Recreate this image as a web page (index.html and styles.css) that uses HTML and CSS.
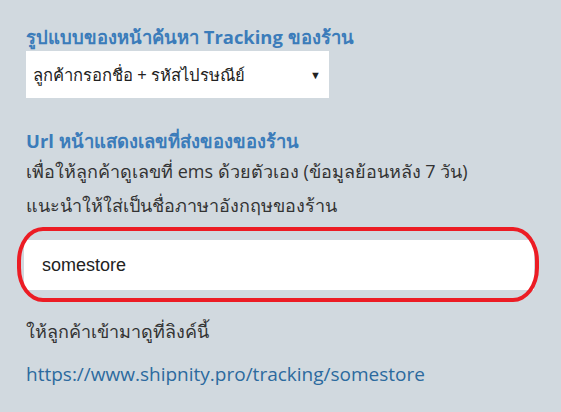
FILE: index.html
```html
<!DOCTYPE html>
<html>
<head>
    <title>Tracking Settings</title>
    <link rel="stylesheet" href="styles.css">
</head>
<body>
    <div class="settings">
        <div class="field">
            <h4 class="field-title">รูปแบบของหน้าค้นหา Tracking ของร้าน</h4>
            <div class="select-box">
                <span>ลูกค้ากรอกชื่อ + รหัสไปรษณีย์</span>
                <span class="arrow">&#9660;</span>
            </div>
        </div>

        <div class="field">
            <h4 class="field-title">Url หน้าแสดงเลขที่ส่งของของร้าน</h4>
            <p class="hint first">เพื่อให้ลูกค้าดูเลขที่ ems ด้วยตัวเอง (ข้อมูลย้อนหลัง 7 วัน)</p>
            <p class="hint">แนะนำให้ใส่เป็นชื่อภาษาอังกฤษของร้าน</p>
            <div class="input-wrap">
                <input class="store-input" type="text" value="somestore">
                <div class="highlight"></div>
            </div>
            <p class="hint">ให้ลูกค้าเข้ามาดูที่ลิงค์นี้</p>
            <a class="track-link" href="#">https://www.shipnity.pro/tracking/somestore</a>
        </div>
    </div>
</body>
</html>
```

FILE: styles.css
```css
body {
    margin: 0;
    background-color: #d1d9df;
    font-family: "Open Sans", sans-serif;
    color: #333;
}

.settings {
    padding: 24px 26px 0 26px;
}

.field-title {
    margin: 0;
    font-size: 18.4px;
    font-weight: bold;
    color: #3b7cba;
    line-height: 26px;
}

.select-box {
    display: flex;
    justify-content: space-between;
    align-items: center;
    width: 303px;
    height: 47px;
    box-sizing: border-box;
    padding: 0 8px 0 7px;
    margin-top: 1px;
    background-color: #fff;
    font-size: 16.6px;
    color: #222;
}

.select-box .arrow {
    font-size: 11px;
}

.field + .field {
    margin-top: 30px;
}

.hint {
    margin: 8px 0 0 0;
    font-size: 18px;
    line-height: 26px;
}

.hint.first {
    margin-top: 4px;
}

.input-wrap {
    position: relative;
    margin: 22px 0 0 -2px;
}

.store-input {
    display: block;
    width: 510px;
    height: 50px;
    box-sizing: border-box;
    border: none;
    padding: 0 18px;
    font-family: "Liberation Sans", Arial, sans-serif;
    font-size: 18px;
    color: #222;
    background-color: #fff;
}

.highlight {
    position: absolute;
    left: -7px;
    top: -13px;
    width: 522px;
    height: 75px;
    box-sizing: border-box;
    border: 4px solid #ec1c24;
    border-radius: 26px / 34px;
}

.track-link {
    display: block;
    margin-top: 17px;
    font-size: 19px;
    color: #2c6a9e;
    text-decoration: none;
}

.input-wrap + .hint {
    margin-top: 28px;
}
```
